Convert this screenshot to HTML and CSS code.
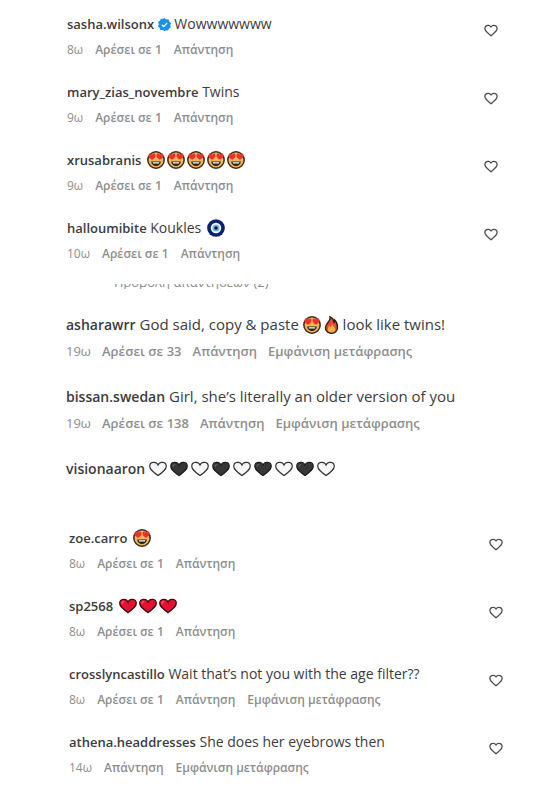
FILE: index.html
```
<!DOCTYPE html>
<html lang="el">
<head>
    <meta charset="UTF-8">
    <meta name="viewport" content="width=device-width, initial-scale=1.0">
    <title>Σχόλια</title>
    <link rel="stylesheet" href="styles.css">
</head>
<body>
    <svg class="sprite" aria-hidden="true">
        <symbol id="like" viewBox="0 0 24 24">
            <path d="M16.800 3.900c-2 0-3.600 1-4.800 3-1.200-2-2.800-3-4.800-3C3.800 3.900 1.500 6.300 1.500 9.600c0 4.500 4 7 10.500 12.400 6.500-5.400 10.500-7.900 10.500-12.400 0-3.300-2.300-5.700-5.700-5.700z" fill="none" stroke="#4a4a4a" stroke-width="2.200" stroke-linejoin="round"/>
        </symbol>
        <symbol id="verified" viewBox="0 0 24 24">
            <path d="M12 0l3.300 2.600 4.200-.1 1.200 4 3.300 2.500L22.600 13l1.200 4-3.500 2.300-1.500 3.900-4.200-.3L12 24l-3.500-1.800-4.200.1-1.200-4L0 15.500 1.400 11.500 0 7.500 3.700 5.200 5.200 1.300l4.200.3z" fill="#1c8fe8"/>
            <path d="M7 12.500l3.500 3.500 6.500-7" fill="none" stroke="#fff" stroke-width="2.400"/>
        </symbol>
        <symbol id="love-eyes" viewBox="0 0 24 24">
            <circle cx="12" cy="12" r="10.900" fill="#f3b45a" stroke="#3a2c20" stroke-width="2"/>
            <path d="M6.800 11.800C3.500 9.600 2 8 2 5.900 2 3 5.600 2.600 6.800 5.200 8 2.600 11.400 3 11.400 5.900c0 2.100-1.500 3.700-4.600 5.900z" fill="#e8322b"/>
            <path d="M17.200 11.800c3.300-2.200 4.800-3.800 4.800-5.900 0-2.900-3.600-3.300-4.800-.7-1.200-2.600-4.600-2.200-4.600.7 0 2.100 1.500 3.700 4.600 5.900z" fill="#e8322b"/>
            <path d="M5.500 14h13c-.5 3.800-3 6-6.500 6s-6-2.200-6.500-6z" fill="#2b2118"/>
            <path d="M7.500 15h9l-.6 1.800H8.100z" fill="#fff"/>
        </symbol>
        <symbol id="nazar" viewBox="0 0 24 24">
            <circle cx="12" cy="12" r="11.800" fill="#0b2272"/>
            <circle cx="12" cy="12" r="7" fill="#fff"/>
            <circle cx="12" cy="12" r="4.800" fill="#6db8e6"/>
            <circle cx="12" cy="12" r="2.300" fill="#0a1430"/>
        </symbol>
        <symbol id="fire" viewBox="0 0 18 24">
            <path d="M7 1c5 2.500 5 5 5.500 7.500 1-.8 1.200-1.800 1-3C16.500 8.500 17 12 17 15c0 5-3.500 8-8 8s-8-3-8-7.500c0-3 1.500-4.500 3-6.500C6 6.500 7.800 4.500 7 1z" fill="#ee4a2f" stroke="#2b1a16" stroke-width="1.800"/>
            <path d="M9.500 10c.5 3 4.500 4.500 4.500 8 0 2.500-2 4-5 4s-5-1.500-5-4c0-2.500 1.500-3 2-5 1 .6 1.300 1.200 1.500 2 1.500-1.500 2-3 2-5z" fill="#fbb040"/>
        </symbol>
        <symbol id="heart-white" viewBox="0 0 24 20">
            <path d="M12 18.800C5 13.500 1 10.500 1 6.200 1 .5 9.500-.8 12 4.700 14.500-.8 23 .5 23 6.200c0 4.300-4 7.300-11 12.600z" fill="#f7f7f7" stroke="#333" stroke-width="1.600"/>
        </symbol>
        <symbol id="heart-black" viewBox="0 0 24 20">
            <path d="M12 18.800C5 13.500 1 10.500 1 6.200 1 .5 9.500-.8 12 4.700 14.500-.8 23 .5 23 6.200c0 4.300-4 7.300-11 12.600z" fill="#363636" stroke="#1d1d1d" stroke-width="1.600"/>
            <path d="M4 7c0-2 1-3 3-3" fill="none" stroke="#666" stroke-width="1.500"/>
        </symbol>
        <symbol id="heart-red" viewBox="0 0 24 20">
            <path d="M12 18.800C5 13.500 1 10.500 1 6.200 1 .5 9.500-.8 12 4.700 14.500-.8 23 .5 23 6.200c0 4.300-4 7.300-11 12.600z" fill="#e5112f" stroke="#3a0c14" stroke-width="1.800"/>
            <path d="M4 7c0-2 1-3 3-3" fill="none" stroke="#f56a7c" stroke-width="1.500"/>
        </symbol>
    </svg>

    <main>
        <section class="comments">
            <article class="comment">
                <div class="body">
                    <p class="text"><a class="user" href="#">sasha.wilsonx</a> <svg class="badge" role="img" aria-label="Επαληθευμένος"><use href="#verified"/></svg> Wowwwwwww</p>
                    <div class="meta"><time>8ω</time><button type="button">Αρέσει σε 1</button><button type="button">Απάντηση</button></div>
                </div>
                <button type="button" class="like" aria-label="Μου αρέσει"><svg><use href="#like"/></svg></button>
            </article>
            <article class="comment">
                <div class="body">
                    <p class="text"><a class="user" href="#">mary_zias_novembre</a> Twins</p>
                    <div class="meta"><time>9ω</time><button type="button">Αρέσει σε 1</button><button type="button">Απάντηση</button></div>
                </div>
                <button type="button" class="like" aria-label="Μου αρέσει"><svg><use href="#like"/></svg></button>
            </article>
            <article class="comment">
                <div class="body">
                    <p class="text"><a class="user" href="#">xrusabranis</a> <span class="emojis"><svg class="emoji"><use href="#love-eyes"/></svg><svg class="emoji"><use href="#love-eyes"/></svg><svg class="emoji"><use href="#love-eyes"/></svg><svg class="emoji"><use href="#love-eyes"/></svg><svg class="emoji"><use href="#love-eyes"/></svg></span></p>
                    <div class="meta"><time>9ω</time><button type="button">Αρέσει σε 1</button><button type="button">Απάντηση</button></div>
                </div>
                <button type="button" class="like" aria-label="Μου αρέσει"><svg><use href="#like"/></svg></button>
            </article>
            <article class="comment">
                <div class="body">
                    <p class="text"><a class="user" href="#">halloumibite</a> Koukles <span class="emojis"><svg class="emoji"><use href="#nazar"/></svg></span></p>
                    <div class="meta"><time>10ω</time><button type="button">Αρέσει σε 1</button><button type="button">Απάντηση</button></div>
                </div>
                <button type="button" class="like" aria-label="Μου αρέσει"><svg><use href="#like"/></svg></button>
            </article>
        </section>

        <div class="replies"><button type="button">Προβολή απαντήσεων (2)</button></div>

        <section class="comments large">
            <article class="comment">
                <div class="body">
                    <p class="text"><a class="user" href="#">asharawrr</a> God said, copy &amp; paste <span class="emojis"><svg class="emoji"><use href="#love-eyes"/></svg><svg class="emoji narrow"><use href="#fire"/></svg></span> look like twins!</p>
                    <div class="meta"><time>19ω</time><button type="button">Αρέσει σε 33</button><button type="button">Απάντηση</button><button type="button">Εμφάνιση μετάφρασης</button></div>
                </div>
            </article>
            <article class="comment">
                <div class="body">
                    <p class="text"><a class="user" href="#">bissan.swedan</a> Girl, she’s literally an older version of you</p>
                    <div class="meta"><time>19ω</time><button type="button">Αρέσει σε 138</button><button type="button">Απάντηση</button><button type="button">Εμφάνιση μετάφρασης</button></div>
                </div>
            </article>
            <article class="comment">
                <div class="body">
                    <p class="text"><a class="user" href="#">visionaaron</a> <span class="emojis"><svg class="emoji"><use href="#heart-white"/></svg><svg class="emoji"><use href="#heart-black"/></svg><svg class="emoji"><use href="#heart-white"/></svg><svg class="emoji"><use href="#heart-black"/></svg><svg class="emoji"><use href="#heart-white"/></svg><svg class="emoji"><use href="#heart-black"/></svg><svg class="emoji"><use href="#heart-white"/></svg><svg class="emoji"><use href="#heart-black"/></svg><svg class="emoji"><use href="#heart-white"/></svg></span></p>
                </div>
            </article>
        </section>

        <section class="comments last">
            <article class="comment">
                <div class="body">
                    <p class="text"><a class="user" href="#">zoe.carro</a> <span class="emojis"><svg class="emoji"><use href="#love-eyes"/></svg></span></p>
                    <div class="meta"><time>8ω</time><button type="button">Αρέσει σε 1</button><button type="button">Απάντηση</button></div>
                </div>
                <button type="button" class="like" aria-label="Μου αρέσει"><svg><use href="#like"/></svg></button>
            </article>
            <article class="comment">
                <div class="body">
                    <p class="text"><a class="user" href="#">sp2568</a> <span class="emojis"><svg class="emoji"><use href="#heart-red"/></svg><svg class="emoji"><use href="#heart-red"/></svg><svg class="emoji"><use href="#heart-red"/></svg></span></p>
                    <div class="meta"><time>8ω</time><button type="button">Αρέσει σε 1</button><button type="button">Απάντηση</button></div>
                </div>
                <button type="button" class="like" aria-label="Μου αρέσει"><svg><use href="#like"/></svg></button>
            </article>
            <article class="comment">
                <div class="body">
                    <p class="text"><a class="user" href="#">crosslyncastillo</a> Wait that’s not you with the age filter??</p>
                    <div class="meta"><time>8ω</time><button type="button">Αρέσει σε 1</button><button type="button">Απάντηση</button><button type="button">Εμφάνιση μετάφρασης</button></div>
                </div>
                <button type="button" class="like" aria-label="Μου αρέσει"><svg><use href="#like"/></svg></button>
            </article>
            <article class="comment">
                <div class="body">
                    <p class="text"><a class="user" href="#">athena.headdresses</a> She does her eyebrows then</p>
                    <div class="meta"><time>14ω</time><button type="button">Απάντηση</button><button type="button">Εμφάνιση μετάφρασης</button></div>
                </div>
                <button type="button" class="like" aria-label="Μου αρέσει"><svg><use href="#like"/></svg></button>
            </article>
        </section>
    </main>
</body>
</html>
```
FILE: styles.css
```
body {
    margin: 0;
    background-color: #fff;
    color: #3c3c3c;
    font-family: "Segoe UI", "Open Sans", "Noto Sans", sans-serif;
    font-size: 14px;
}
.sprite {
    display: none;
}
main {
    padding-top: 14px;
}
button {
    padding: 0;
    border: none;
    background: none;
    color: inherit;
    font: inherit;
    cursor: pointer;
}
.comments {
    display: flex;
    flex-direction: column;
    gap: 23px;
    padding: 0 62px 0 67px;
}
.comment {
    display: flex;
    align-items: center;
    justify-content: space-between;
}
.text {
    margin: 0;
    line-height: 20px;
}
.user {
    color: #3c3c3c;
    font-size: 13px;
    font-weight: 600;
    line-height: 1;
    text-decoration: none;
}
.badge {
    width: 13px;
    height: 13px;
    vertical-align: -2px;
}
.emojis {
    display: inline-flex;
    gap: 2px;
    margin-left: 2px;
    vertical-align: -4px;
}
.emoji {
    width: 18px;
    height: 18px;
}
.narrow {
    width: 15px;
}
.meta {
    display: flex;
    gap: 12px;
    margin-top: 7px;
    color: #8e8e8e;
    font-size: 12px;
    line-height: 18px;
}
.meta button {
    font-weight: 600;
}
.like {
    margin-bottom: 13px;
}
.like svg {
    display: block;
    width: 14px;
    height: 14px;
}
/* only the lower edge of this line shows */
.replies {
    display: flex;
    align-items: flex-end;
    height: 5px;
    margin-top: 21px;
    padding-left: 114px;
    overflow: hidden;
    color: #8a8a8a;
    font-size: 13px;
    line-height: 14px;
}
.large {
    gap: 26px;
    padding: 25px 62px 0 66px;
    font-size: 15px;
}
.large .user {
    font-size: 14px;
}
.large .emojis {
    gap: 3px;
    margin-left: 0;
}
.large .meta {
    gap: 11px;
    margin-top: 8px;
    font-size: 13px;
}
.last {
    padding: 50px 57px 16px 69px;
}
```
